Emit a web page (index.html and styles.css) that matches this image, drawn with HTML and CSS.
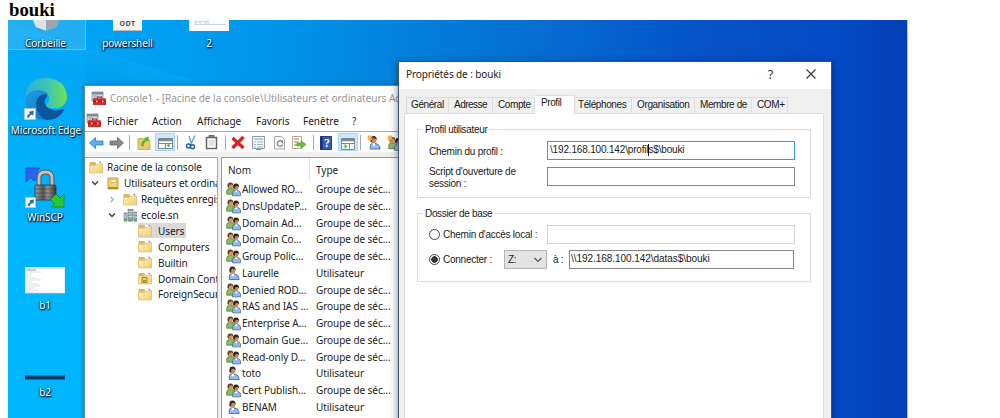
FILE: index.html
```html
<!DOCTYPE html>
<html lang="fr">
<head>
<meta charset="utf-8">
<title>bouki</title>
<link rel="stylesheet" href="styles.css">
</head>
<body>
<svg class="defs" width="0" height="0" aria-hidden="true">
  <defs>
    <linearGradient id="gFolder" x1="0" y1="0" x2="1" y2="1"><stop offset="0" stop-color="#fff0b4"/><stop offset="1" stop-color="#f0cd78"/></linearGradient>
    <linearGradient id="gEdgeTop" x1="0" y1="0.5" x2="1" y2="0.5"><stop offset="0" stop-color="#2fb0dc"/><stop offset="0.55" stop-color="#3cc5b4"/><stop offset="1" stop-color="#72e052"/></linearGradient>
    <linearGradient id="gEdgeLow" x1="0" y1="0" x2="1" y2="1"><stop offset="0" stop-color="#1ea0e6"/><stop offset="1" stop-color="#1268b8"/></linearGradient>
    <linearGradient id="gLock" x1="0" y1="0" x2="1" y2="0"><stop offset="0" stop-color="#999"/><stop offset="0.4" stop-color="#555"/><stop offset="0.6" stop-color="#929292"/><stop offset="1" stop-color="#373737"/></linearGradient>
    <symbol id="folder" viewBox="0 0 14 13">
      <path d="M.5 2Q.5 1 1.500 1H6l1 1.200h5.800q.7 0 .7.8v8.500H.5z" fill="#e0b65d"/>
      <path d="M7 .8h5v3H7z" fill="#fff"/><path d="M10.500 .8H12v1.500h-1.500z" fill="#4c91e0"/>
      <path d="M.5 4.300h6l1-1.100h6v8.800H.5z" fill="url(#gFolder)" stroke="#dfb966" stroke-width=".6"/>
    </symbol>
    <symbol id="mmc" viewBox="0 0 15 15">
      <path d="M1 1h11v9H1z" fill="#d9dee3" stroke="#7f8992" stroke-width=".8"/><path d="M1 1h11v2.500H1z" fill="#7e8a98"/>
      <path d="M2.500 5h4M2.500 7h3" stroke="#8b98a5"/>
      <path d="M6.500 7.500V6h4v1.500" fill="none" stroke="#a81c19" stroke-width="1.100"/>
      <path d="M2 8Q2 7.300 3 7.300h11q1 0 1 .7v5.500q0 .5-.6.5H2.500q-.5 0-.5-.5z" fill="#c9302c"/><path d="M2 10.500h13" stroke="#8f1815" stroke-width=".8"/>
      <path d="M5 9.700h1.500v1.600H5zM11 9.700h1.500v1.600H11z" fill="#f3dcdb"/>
    </symbol>
    <symbol id="person" viewBox="0 0 16 16">
      <path d="M3.500 15V11.500Q3.500 9 6.500 9h2q4.300.3 5 3.500L14 15z" fill="#91bcec" stroke="#3d6391" stroke-width=".9"/>
      <path d="M6 8.500h2.500v2.200L7.500 12 6 10.500z" fill="#fff"/>
      <ellipse cx="7" cy="5.300" rx="2.900" ry="3.600" fill="#c98e56"/><path d="M3.700 6.800Q3 1 7 1q3.800.2 3.300 4.500L8.800 3.500 6 3.700 5 8z" fill="#302924"/>
    </symbol>
    <symbol id="group" viewBox="0 0 16 16">
      <path d="M.8 13.500V10Q1 7.500 3.500 7.500H7l2.500 2v4z" fill="#8bba62" stroke="#4c7637" stroke-width=".8"/>
      <ellipse cx="4.700" cy="4.500" rx="2.700" ry="3.100" fill="#ce995d"/><path d="M1.600 5.600Q1 1 4.800 1q3.200.1 2.800 3.500L6 3 3.500 3.700 2.800 7z" fill="#61452c"/>
      <path d="M7 15.300V12Q7.200 9.500 9.500 9.500h3q2.400.3 3 3v2.800z" fill="#8fbbe8" stroke="#3e638e" stroke-width=".8"/>
      <path d="M10 9.200h2v1.500l-.8 1L10 10.500z" fill="#fff"/>
      <ellipse cx="10.600" cy="6.100" rx="2.600" ry="3.200" fill="#c58a53"/><path d="M7.600 7Q7 2.200 10.600 2.200q3.700 0 3.200 4.300L12.500 4.800 10 5 9 8z" fill="#30251e"/>
    </symbol>
    <symbol id="shortcut" viewBox="0 0 11 11">
      <path d="M.5.500h10v10H.5z" fill="#f7f9fc" stroke="#b9c6d4" stroke-width=".7"/><path d="M3 9V7.500Q3 5.500 5.500 5.300L4.300 3.500 9 2.500 8.300 7 7.200 6Q5 6.500 4.600 9z" fill="#2a68b4"/>
    </symbol>
  </defs>
</svg>

<h3 class="heading">bouki</h3>

<div class="desktop">
  <div class="streak"></div>
  <div class="shortcut selected corbeille">
    <svg width="34" height="16" viewBox="0 0 34 16"><path d="M4 0h26l-3 7-10 3.500L7 7z" fill="#c7ced4"/><path d="M17 0h13l-3 7-10 3.500z" fill="#9ca6b0"/><path d="M4 0h13v10.500L7 7z" fill="#dfe3e6"/></svg>
    <span>Corbeille</span>
  </div>
  <div class="shortcut powershell">
    <div class="odt">ODT</div>
    <span>powershell</span>
  </div>
  <div class="shortcut deux">
    <svg width="40" height="11" viewBox="0 0 40 11"><path d="M0 0h40v11H0z" fill="#fbfcfd"/><path d="M5 1.500h13M5 4.500h32M19 0v4" stroke="#c5ccd3" stroke-width=".8"/><path d="M5 2.500h14" stroke="#d8dde1" stroke-width="2" stroke-dasharray="3 2"/></svg>
    <span>2</span>
  </div>
  <div class="shortcut edge">
    <svg width="44" height="44" viewBox="0 0 44 44">
      <path d="M1 22Q3 10 16 12q9 2 7 7-7 8-2 13 7 7 19 2-7 9-18 9Q3 42 1 22z" fill="url(#gEdgeLow)"/>
      <path d="M12 27q1-10 10-10 2 1 .5 3-4 5 0 9 7 7 16 3 2 0 1 2-6 9-16 9-11-4-11.500-16z" fill="#0b559d"/>
      <path d="M1 22Q2 1 22 1q20 1 21 19 0 9-10 11-11 1-11-3 6-6 1-12-6-5-14-2Q3 16 1 22z" fill="url(#gEdgeTop)"/>
      <use href="#shortcut" x="0" y="31" width="12" height="12"/>
    </svg>
    <span>Microsoft Edge</span>
  </div>
  <div class="shortcut winscp">
    <svg width="42" height="43" viewBox="0 0 42 43">
      <path d="M1 2l14 0-3.500 4 3.500 3-6 6-3.500-3.500L1 16z" fill="#2d64ed" stroke="#1746b5" stroke-width=".7"/>
      <path d="M14 20V12q0-6 6.500-6T27 12v8" fill="none" stroke="#565b60" stroke-width="5"/><path d="M14 20V12q0-6 6.500-6T27 12v8" fill="none" stroke="#bdc1c4" stroke-width="2.800"/>
      <rect x="10" y="19" width="21" height="15" rx="1.500" fill="url(#gLock)" stroke="#333" stroke-width=".8"/>
      <path d="M10 23h21M10 27h21M10 31h21" stroke="#333" stroke-width=".7" opacity=".6"/>
      <path d="M39 41H26l3.500-3.500-4-4 5.500-5.500 4 4 4-4z" fill="#29c92d" stroke="#117e19" stroke-width=".7"/>
      <use href="#shortcut" x="0" y="31" width="11" height="11"/>
    </svg>
    <span>WinSCP</span>
  </div>
  <div class="shortcut b1">
    <svg width="40" height="27" viewBox="0 0 40 27"><path d="M0 0h40v26H0z" fill="#fff" stroke="#c8dbe9" stroke-width=".7"/><path d="M1 1h38" stroke="#c9ced3"/><path d="M2 3h9" stroke="#6d9fd5"/><path d="M2 5h14M2 7h5M2 9h4M2 11h10M2 13h14M2 15h5M2 17h12M2 19h13M2 21h8M2 23h11M2 25h6" stroke="#cbd0d5" stroke-width=".7"/></svg>
    <span>b1</span>
  </div>
  <div class="shortcut b2">
    <svg width="40" height="5" viewBox="0 0 40 5"><path d="M0 .5h40v4H0z" fill="#063768"/><path d="M1 1h38" stroke="#366b8d" stroke-width=".8"/></svg>
    <span>b2</span>
  </div>

  <section class="console">
    <div class="console-title"><svg class="ico15"><use href="#mmc"/></svg><span>Console1 - [Racine de la console\Utilisateurs et ordinateurs Active Directory]</span></div>
    <nav class="menu"><svg class="ico15"><use href="#mmc"/></svg><span class="m1">Fichier</span><span class="m2">Action</span><span class="m3">Affichage</span><span class="m4">Favoris</span><span class="m5">Fenêtre</span><span>?</span></nav>
    <div class="toolbar">
      <svg width="325" height="20" viewBox="0 0 325 20">
        <path d="M4.500 11l6-5.500V9H18v4h-7.500v3.500z" fill="#56b5ef" stroke="#2876b8" stroke-width=".8"/>
        <path d="M38.500 11l-6-5.500V9H25v4h7.500v3.500z" fill="#858b90" stroke="#5e6469" stroke-width=".8"/>
        <path d="M44.500 3v15M92.500 3v15M140.500 3v15M228.500 3v15M275.500 3v15" stroke="#a6a6a6"/>
        <path d="M53 6.500h5l1 1.500h6v9.500H53z" fill="#edc76b" stroke="#c39a43" stroke-width=".7"/><path d="M56 14q0-5 4-6L58.500 6.500l5-2 .5 5L62.500 8.500q-4 2-4 6z" fill="#55b72e"/>
        <path d="M70.500 1.500h19v17h-19z" fill="#cce8ff" stroke="#a5d4f6"/>
        <g fill="#fff" stroke="#7d8994"><path d="M73.500 6.500h14v10h-14z"/><path d="M73 8h15" stroke-width="2.500"/><path d="M74 11.500h13M80.500 11v5"/></g><path d="M84.500 11.500v4l-3-2z" fill="#41b52e"/>
        <path d="M104 4l3 9M110 3.500L105.500 13" stroke="#69b0dc" stroke-width="1.600"/><g fill="none" stroke="#2b5fa2" stroke-width="1.500"><circle cx="103.500" cy="14" r="2"/><circle cx="107.500" cy="14.700" r="2"/></g>
        <path d="M121.500 5.500h10v11h-10z" fill="#fff" stroke="#666" stroke-width="1.500"/><path d="M124 3.500h5v2h-5z" fill="#888" stroke="#666"/><path d="M123.500 9h6M123.500 11h6M123.500 13h6" stroke="#aaa" stroke-width=".7"/>
        <path d="M147.500 6l11 10M158.500 5l-11 11" stroke="#df2020" stroke-width="3.300"/>
        <path d="M167.500 4.500h12v12h-12z" fill="#f3f6f8" stroke="#929da5"/><path d="M169 7h9" stroke="#82a5be"/><path d="M169 10h2M172 10h6M169 12.500h2M172 12.500h6M169 15h2M172 15h6" stroke="#9db7c8"/><path d="M171 17.500h5" stroke="#30afe0"/>
        <path d="M189.500 4.500h7l3 3v9.500h-10z" fill="#f8f8f8" stroke="#aaa"/><path d="M197 9.500a2.800 2.800 0 1 0 .7 3" fill="none" stroke="#888" stroke-width="1.300"/><path d="M195 8.500h3.200V12z" fill="#888"/>
        <path d="M207.500 4.500h9v12h-9z" fill="#fff9de" stroke="#b3ad91"/><path d="M209 7h5M209 10h5M209 13h5" stroke="#838383"/><path d="M212 11h4V8.500l5 4-5 4V14h-4z" fill="#60c83b" stroke="#34912b" stroke-width=".5"/>
        <path d="M235.500 4.500h11v13h-11z" fill="#365ab8" stroke="#233d87"/><path d="M235.500 4.500h2v13h-2z" fill="#182d6c"/><text x="239" y="15" fill="#fff" font-family="Liberation Serif, serif" font-size="12" font-weight="bold">?</text>
        <path d="M253.500 1.500h19v17h-19z" fill="#cce8ff" stroke="#a5d4f6"/><g fill="#fff" stroke="#7d8994"><path d="M256.500 6.500h13v11h-13z"/><path d="M256 8h14" stroke-width="2.500"/><path d="M257 11.500h12M264.500 11v6"/></g><path d="M259.500 12v4.500l3-2.200z" fill="#41b52e"/>
        <use href="#person" x="282" y="3" width="15" height="15"/><path d="M285 3v6M282 6h6M283 4l4 4M287 4l-4 4" stroke="#f2b238" stroke-width="1.100"/>
        <use href="#group" x="303" y="4" width="15" height="15"/><path d="M305 3v6M302 6h6M303 4l4 4M307 4l-4 4" stroke="#f2b238" stroke-width="1.100"/>
      </svg>
    </div>
    <div class="panes">
      <ul class="tree">
        <li class="lv0"><svg class="fold"><use href="#folder"/></svg><span>Racine de la console</span></li>
        <li class="lv1"><svg class="chev" viewBox="0 0 8 6"><path d="M1 1l3 3 3-3" fill="none" stroke="#444" stroke-width="1.500"/></svg><svg class="fold" viewBox="0 0 14 13"><path d="M2 1h10v11H2z" fill="#efd374" stroke="#b98e28" stroke-width=".8"/><path d="M5 3h5v2.500H5z" fill="#fff" stroke="#ba9847" stroke-width=".5"/><path d="M2 10h10v2H2z" fill="#b98d25"/></svg><span>Utilisateurs et ordinateurs</span></li>
        <li class="lv2"><svg class="chev" viewBox="0 0 8 8"><path d="M2.500 1l3 3-3 3" fill="none" stroke="#999" stroke-width="1.200"/></svg><svg class="fold"><use href="#folder"/></svg><span>Requêtes enregistrées</span></li>
        <li class="lv2"><svg class="chev" viewBox="0 0 8 6"><path d="M1 1l3 3 3-3" fill="none" stroke="#444" stroke-width="1.500"/></svg><svg class="fold" viewBox="0 0 14 13"><path d="M5 0h5v12H5zM1 4h3v8H1zM11 3h3v9h-3z" fill="#94a3ac" stroke="#66757e" stroke-width=".6"/><path d="M5.500 2.500h4M5.500 5h4M5.500 7.500h4M1 6h3M1 8h3M11 5h3M11 8h3" stroke="#dce4e8" stroke-width=".8"/><path d="M1 10h2.500v2.500H1zM6 10h2.500v2.500H6zM11 10h2.500v2.500H11z" fill="#53be38"/></svg><span>ecole.sn</span></li>
        <li class="lv3 current"><svg class="fold"><use href="#folder"/></svg><span>Users</span></li>
        <li class="lv3"><svg class="fold"><use href="#folder"/></svg><span>Computers</span></li>
        <li class="lv3"><svg class="fold"><use href="#folder"/></svg><span>Builtin</span></li>
        <li class="lv3"><svg class="fold" viewBox="0 0 14 13"><use href="#folder" width="14" height="13"/><path d="M4 5.500h5v5H4z" fill="#ecd15d" stroke="#927125" stroke-width=".8"/><path d="M5 8.800h3" stroke="#7a5a13"/></svg><span>Domain Controllers</span></li>
        <li class="lv3"><svg class="fold"><use href="#folder"/></svg><span>ForeignSecurityPrincipals</span></li>
      </ul>
      <div class="list">
        <div class="cols"><span class="nom">Nom</span><span class="type">Type</span></div>
        <div class="item"><svg><use href="#group"/></svg><span class="nom">Allowed RO...</span><span>Groupe de séc...</span></div>
        <div class="item"><svg><use href="#group"/></svg><span class="nom">DnsUpdateP...</span><span>Groupe de séc...</span></div>
        <div class="item"><svg><use href="#group"/></svg><span class="nom">Domain Ad...</span><span>Groupe de séc...</span></div>
        <div class="item"><svg><use href="#group"/></svg><span class="nom">Domain Co...</span><span>Groupe de séc...</span></div>
        <div class="item"><svg><use href="#group"/></svg><span class="nom">Group Polic...</span><span>Groupe de séc...</span></div>
        <div class="item"><svg><use href="#person"/></svg><span class="nom">Laurelle</span><span>Utilisateur</span></div>
        <div class="item"><svg><use href="#group"/></svg><span class="nom">Denied ROD...</span><span>Groupe de séc...</span></div>
        <div class="item"><svg><use href="#group"/></svg><span class="nom">RAS and IAS ...</span><span>Groupe de séc...</span></div>
        <div class="item"><svg><use href="#group"/></svg><span class="nom">Enterprise A...</span><span>Groupe de séc...</span></div>
        <div class="item"><svg><use href="#group"/></svg><span class="nom">Domain Gue...</span><span>Groupe de séc...</span></div>
        <div class="item"><svg><use href="#group"/></svg><span class="nom">Read-only D...</span><span>Groupe de séc...</span></div>
        <div class="item"><svg><use href="#person"/></svg><span class="nom">toto</span><span>Utilisateur</span></div>
        <div class="item"><svg><use href="#group"/></svg><span class="nom">Cert Publish...</span><span>Groupe de séc...</span></div>
        <div class="item"><svg><use href="#person"/></svg><span class="nom">BENAM</span><span>Utilisateur</span></div>
        <div class="item"><svg><use href="#person"/></svg></div>
      </div>
    </div>
  </section>

  <section class="dialog">
    <header class="dialog-title"><span class="caption">Propriétés de : bouki</span><span class="help">?</span><svg width="10" height="10" viewBox="0 0 10 10"><path d="M.5.500l9 9M9.500.500l-9 9" stroke="#333" stroke-width="1.100"/></svg></header>
    <div class="tabs">
      <span class="tab t1">Général</span><span class="tab t2">Adresse</span><span class="tab t3">Compte</span><span class="tab t4 active">Profil</span><span class="tab t5">Téléphones</span><span class="tab t6">Organisation</span><span class="tab t7">Membre de</span><span class="tab t8">COM+</span>
    </div>
    <div class="page">
      <div class="groupbox">
        <div class="legend"><span>Profil utilisateur</span></div>
        <div class="row r1"><label class="lab">Chemin du profil :</label><div class="field focus"><span>\192.168.100.142\profil</span><i class="caret"></i><span>s$\bouki</span></div></div>
        <div class="row r2"><label class="lab">Script d'ouverture de<br>session :</label><div class="field"></div></div>
      </div>
      <div class="groupbox second">
        <div class="legend"><span>Dossier de base</span></div>
        <div class="row r3"><span class="radio"></span><label class="lab local">Chemin d'accès local :</label><div class="field disabled"></div></div>
        <div class="row r4"><span class="radio on"></span><label class="lab connect">Connecter :</label><div class="combo"><span>Z:</span><svg width="8" height="6" viewBox="0 0 8 6"><path d="M.5 1L4 4.500 7.500 1" fill="none" stroke="#555" stroke-width="1.100"/></svg></div><label class="to">à :</label><div class="field last"><span>\\192.168.100.142\datas$\bouki</span></div></div>
      </div>
    </div>
  </section>
</div>
</body>
</html>
```
FILE: styles.css
```css
* { box-sizing: border-box; }
html, body { height: 100%; overflow: hidden; }
body { margin: 0; background: #fff; color: #1a1a1a; }
svg { display: block; flex: none; }
.defs { position: absolute; }
.heading { margin: 0; padding-left: 9px; height: 20px; font: bold 18.72px/20px "Liberation Serif", serif; color: #000; }

.desktop {
  position: relative; margin-left: 8px; width: 900px; height: 398px; overflow: hidden;
  border-right: 1px solid #b4c2dd;
  background:
    linear-gradient(90deg, #00a8f5 0, #00a0f2 130px, #0095ea 270px, #0280dc 400px, #056fd4 520px, #0562cf 600px, #0452c6 700px, #044bc5 830px, #043fb6 900px);
  font-family: "Noto Sans", sans-serif; font-size: 10px;
}
.desktop::before { content: ""; position: absolute; left: 0; top: 0; width: 77px; height: 398px; background: linear-gradient(180deg, transparent, #00b6ff 60%); }
.streak { position: absolute; left: 0; top: 0; width: 250px; height: 65px; background: linear-gradient(197deg, transparent 56%, rgba(40,185,255,.18) 57%, transparent 75%); }

.shortcut { position: absolute; display: flex; flex-direction: column; align-items: center; justify-content: space-between; color: #fff; line-height: 14px; white-space: nowrap; letter-spacing: -.1px; text-shadow: 1px 1px 1px #001c35, 0 1px 2px #002f55, 0 0 2px #003a66; }
.corbeille { left: 0; top: 0; width: 78px; height: 30px; padding-right: 2px; }
.selected { background: rgba(110,195,240,.3); border: 1px solid rgba(150,215,250,.5); border-top: 0; border-left: 0; }
.powershell { left: 79px; top: 0; width: 81px; height: 30px; }
.odt { width: 29px; height: 11px; background: #f5f5f5; border-bottom: 1px solid #bbb; color: #555; font: bold 7px/8px "Noto Sans", sans-serif; letter-spacing: .5px; text-align: center; text-shadow: none; }
.deux { left: 181px; top: 0; width: 40px; height: 30px; }
.edge { left: 0; top: 57px; width: 76px; height: 60px; letter-spacing: 0; }
.winscp { left: 17px; top: 146px; width: 42px; height: 58px; }
.winscp span { margin-right: 2px; }
.b1 { left: 17px; top: 247px; width: 40px; height: 45px; }
.b2 { left: 17px; top: 355px; width: 40px; height: 24px; }

.console { position: absolute; left: 76px; top: 65px; width: 420px; height: 340px; background: #fff; border: 1px solid #5e8cab; border-top-color: #4595cd; box-shadow: 0 0 5px rgba(0,40,80,.45); white-space: nowrap; line-height: 14px; }
.ico15 { width: 15px; height: 15px; }
.console-title { display: flex; align-items: center; gap: 4px; height: 24px; padding-left: 6px; color: #969696; }
.menu { display: flex; align-items: center; height: 22px; padding-left: 1px; border-bottom: 1px solid #aaa; }
.m1 { margin-left: 6px; width: 45px; }
.m2 { width: 45px; }
.m3 { width: 59px; }
.m4 { width: 47px; }
.m5 { width: 49px; }
.toolbar { height: 20px; }
.panes { display: flex; gap: 3px; height: 280px; border-top: 5px solid #f0f0f0; background: #f0f0f0; }
.tree { list-style: none; margin: 0; padding: 1.4px 0 0; width: 133px; border: 1px solid #aaa; border-left: 0; background: #fff; overflow: hidden; }
.tree li { display: flex; align-items: center; height: 15.9px; }
.fold { width: 14px; height: 13px; margin-right: 3px; }
.chev { width: 8px; height: 7px; margin-right: 7px; }
.tree span { height: 14px; padding-left: 1px; }
.lv0 { padding-left: 4px; }
.lv1 { padding-left: 6px; letter-spacing: -.08px; }
.lv2 { padding-left: 23px; letter-spacing: -.1px; }
.lv3 { padding-left: 53px; }
.lv3 span { padding-left: 3px; letter-spacing: -.08px; }
.current { background: linear-gradient(#d9d9d9, #d9d9d9) 53px 0 / 48px 15px no-repeat; }
.list { flex: 1; border: 1px solid #999; background: #fff; color: #222; }
.cols { display: flex; height: 22.7px; line-height: 25px; padding-left: 6px; }
.cols .nom { width: 82px; border-right: 1px solid #e0e0e0; }
.cols .type { padding-left: 6px; }
.item { display: flex; align-items: center; height: 16.78px; padding-left: 4px; letter-spacing: -.06px; }
.item svg { width: 15px; height: 16px; margin-right: 1px; }
.item .nom { width: 74px; }

.dialog { position: absolute; left: 390px; top: 41px; width: 434px; height: 370px; background: #f0f0f0; border: 1px solid #38536d; box-shadow: 0 2px 8px rgba(0,15,60,.55); font-family: "Liberation Sans", Arial, sans-serif; letter-spacing: -.25px; white-space: nowrap; }
.dialog-title { display: flex; align-items: center; height: 27px; padding: 0 15px 3px 7px; background: #fff; font-family: "Noto Sans", sans-serif; letter-spacing: -.1px; }
.caption { width: 362px; }
.help { flex: 1; font-size: 12px; }
.tabs { display: flex; align-items: flex-end; height: 24px; padding-left: 7px; line-height: 14px; letter-spacing: -.4px; }
.tab { height: 16px; border: 1px solid #dcdcdc; border-bottom: 0; border-left: 0; padding-left: 4px; }
.t1 { width: 43px; border-left: 1px solid #dcdcdc; }
.t2 { width: 44px; padding-left: 5px; letter-spacing: -.5px; }
.t3 { width: 42px; padding-left: 5px; }
.active { height: 19px; width: 40px; background: #fff; padding-left: 6px; margin-bottom: -1px; z-index: 1; }
.t5 { width: 57px; padding-left: 3px; }
.t6 { width: 63px; padding-left: 5px; letter-spacing: -.35px; }
.t7 { width: 57px; padding-left: 5px; }
.t8 { width: 36px; padding-left: 5px; }
.page { margin: 0 7px 0 5px; height: 320px; background: #fff; border: 1px solid #dcdcdc; padding: 15px 12px 0; }
.groupbox { width: 394px; height: 69px; border: 1px solid #dcdcdc; padding-left: 11px; }
.second { margin-top: 15px; }
.legend { height: 12px; margin-top: -6px; margin-left: -6px; line-height: 12px; letter-spacing: -.33px; }
.legend span { background: #fff; padding: 0 2px; display: inline-block; }
.row { display: flex; align-items: center; height: 19px; }
.r1 { margin-top: 5px; }
.r2 { margin-top: 7px; }
.r3 { margin-top: 5px; }
.r4 { margin-top: 6px; }
.lab { width: 118px; line-height: 12px; }
.r1 .lab, .r2 .lab { padding-top: 2px; }
.field { display: flex; align-items: center; width: 248px; height: 19px; border: 1px solid #858585; background: #fff; padding: 0 0 2px 2px; letter-spacing: -.17px; }
.focus { border-color: #3d97df; }
.disabled { border-color: #d2d2d2; }
.caret { width: 1px; height: 12px; background: #000; margin-right: -1px; }
.radio { width: 11px; height: 11px; border: 1px solid #444; border-radius: 50%; background: #fff; margin-right: 3px; }
.radio.on { background: radial-gradient(circle, #333 0 3px, #fff 3.6px); }
.local { width: 104px; }
.connect { width: 61px; }
.combo { display: flex; align-items: center; justify-content: space-between; width: 43px; height: 19px; background: #e3e3e3; border: 1px solid #b5b5b5; padding: 0 4px 0 3px; }
.to { width: 22px; padding-left: 6px; }
.last { width: 225px; padding-left: 1px; letter-spacing: -.05px; }
```
